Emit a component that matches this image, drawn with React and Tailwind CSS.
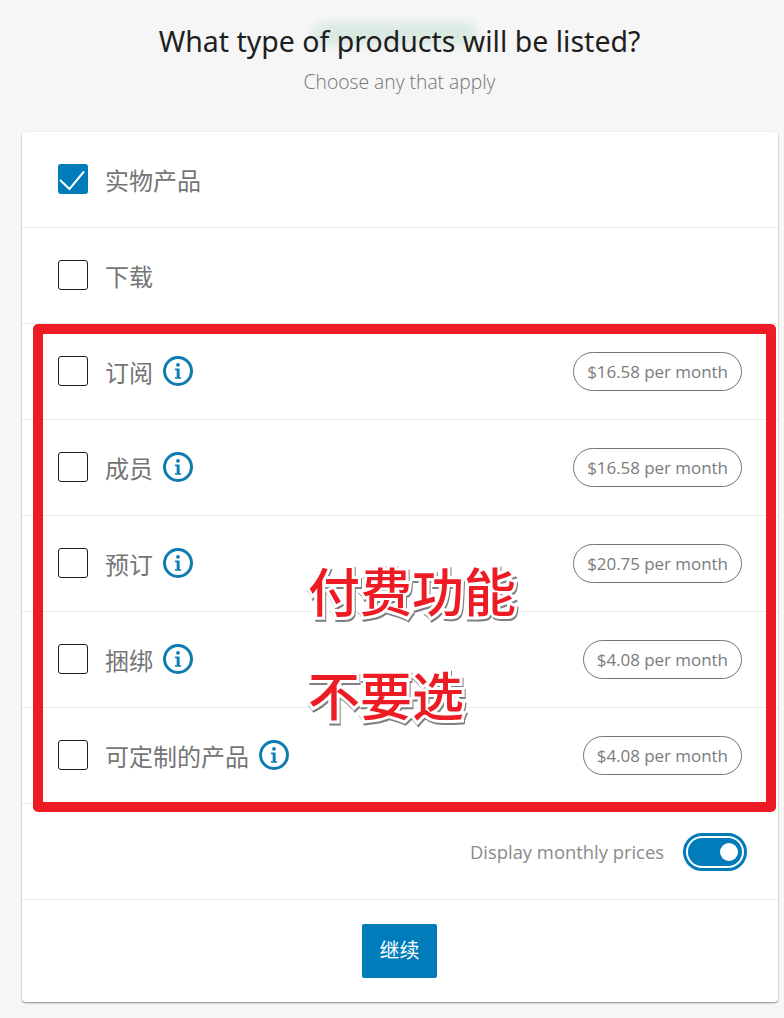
const CJK = "font-['Open_Sans','Noto_Sans_CJK_SC',sans-serif]";

function Box({ checked }) {
  return checked ? (
    <span className="flex h-[30px] w-[30px] shrink-0 items-center justify-center rounded-[3px] bg-[#007cba]">
      <svg viewBox="0 0 30 30" className="h-[30px] w-[30px]" fill="none" stroke="#fff" strokeWidth="2">
        <path d="M2 16 L11.5 25 L26 7.5" />
      </svg>
    </span>
  ) : (
    <span className="h-[30px] w-[30px] shrink-0 rounded-[3px] border border-[#1e1e1e] bg-white" />
  );
}

function Info() {
  return (
    <svg viewBox="0 0 30 30" className="h-[30px] w-[30px] shrink-0">
      <circle cx="15" cy="15" r="13.5" fill="none" stroke="#0f7cb0" strokeWidth="3" />
      <circle cx="15" cy="8.8" r="1.9" fill="#0f7cb0" />
      <path d="M12 12.6h4.6v8.6h1.6v1.6h-6.2v-1.6h1.7v-7h-1.7z" fill="#0f7cb0" />
    </svg>
  );
}

function Row({ label, checked, info, price }) {
  return (
    <div className="flex h-[96px] items-center border-b border-[#ececed] px-[36px] pb-[2px]">
      <Box checked={checked} />
      <span className="relative top-[2px] ml-[17px] text-[24px] leading-[32px] text-[#757575]">{label}</span>
      {info && <span className="ml-[10px] flex"><Info /></span>}
      {price && (
        <span className="relative top-[1px] ml-auto flex h-[39px] items-center rounded-full border border-[#757575] px-[13px] text-[17px] tracking-[-0.05px] text-[#7c7c7c]">
          {price}
        </span>
      )}
    </div>
  );
}

export default function App() {
  const rows = [
    { label: "实物产品", checked: true },
    { label: "下载" },
    { label: "订阅", info: true, price: "$16.58 per month" },
    { label: "成员", info: true, price: "$16.58 per month" },
    { label: "预订", info: true, price: "$20.75 per month" },
    { label: "捆绑", info: true, price: "$4.08 per month" },
    { label: "可定制的产品", info: true, price: "$4.08 per month" },
  ];
  const overlay =
    "absolute left-[308px] text-[52px] leading-[56px] font-medium text-[#ed1c24] [-webkit-text-stroke:6px_#fff] [paint-order:stroke_fill] drop-shadow-[1px_2px_0px_rgba(0,0,0,0.5)] whitespace-nowrap";
  return (
    <div className={`relative h-[1018px] w-[784px] overflow-hidden bg-[#f6f6f6] ${CJK}`}>
      <div className="absolute left-[312px] top-[22px] h-[24px] w-[165px] rounded-full bg-[#cfe6da] opacity-70 blur-[5px]" />
      <div className="relative flex h-[132px] flex-col items-center pl-[15px]">
        <h1 className="mt-[21px] text-[28.5px] leading-[40px] font-normal text-[#1e1e1e] font-['Noto_Sans',sans-serif]">
          What type of products will be listed?
        </h1>
        <p className="mt-[6px] text-[19.3px] leading-[30px] font-light text-[#757575]">Choose any that apply</p>
      </div>
      <div className="mx-[22px] h-[870px] w-[756px] rounded-[4px] bg-white shadow-[0_1px_2px_rgba(0,0,0,0.45)]">
        {rows.map((r) => (
          <Row key={r.label} {...r} />
        ))}
        <div className="flex h-[96px] items-center justify-end border-b border-[#ececed] pr-[31px]">
          <span className="text-[18.4px] text-[#8a8a8a]">Display monthly prices</span>
          <span className="ml-[19px] flex h-[38px] w-[64px] items-center justify-end rounded-full border-[3px] border-[#007cba] bg-white p-[2px]">
            <span className="flex h-full w-full items-center justify-end rounded-full bg-[#007cba] pr-[4px]">
              <span className="h-[18px] w-[18px] rounded-full bg-white" />
            </span>
          </span>
        </div>
        <div className="flex h-[102px] items-center justify-center pr-[2px] pb-[1px]">
          <button className="h-[54px] w-[75px] rounded-[2px] bg-[#007cba] pl-[1px] text-[20px] text-white">继续</button>
        </div>
      </div>
      <div className="absolute left-[33px] top-[324px] h-[488px] w-[743px] rounded-[5px] border-[10px] border-[#ed1c24]" />
      <div className={`${overlay} top-[564px]`}>付费功能</div>
      <div className={`${overlay} top-[668px]`}>不要选</div>
    </div>
  );
}
